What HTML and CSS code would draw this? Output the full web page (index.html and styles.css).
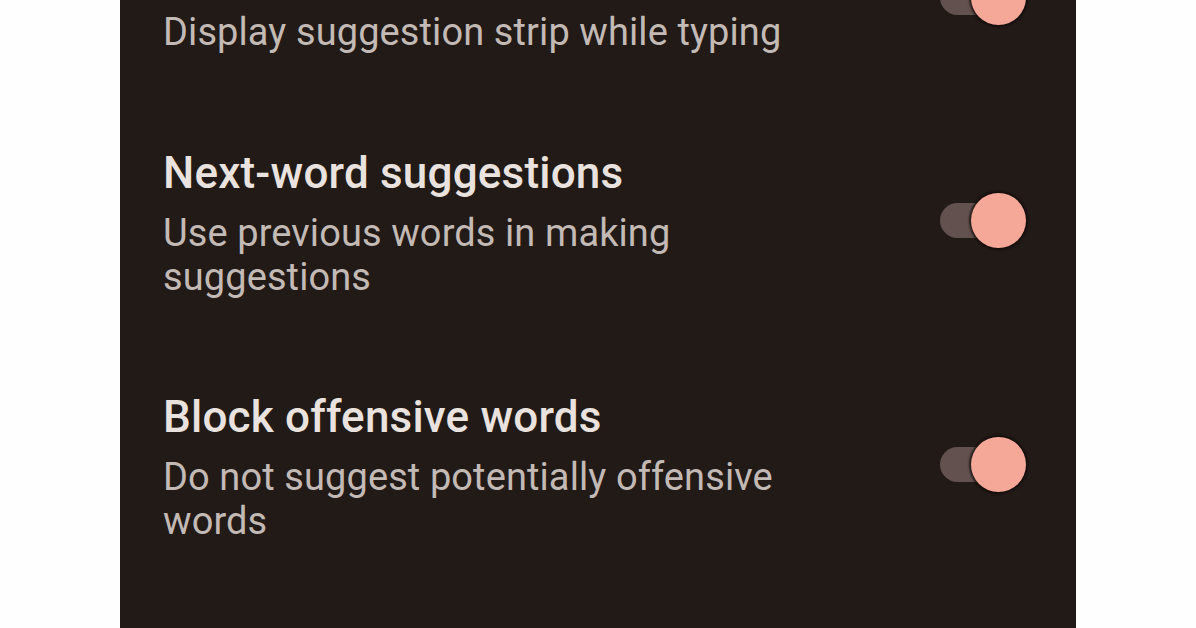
FILE: index.html
```html
<!DOCTYPE html>
<html lang="en">
<head>
    <meta charset="UTF-8">
    <meta name="viewport" content="width=device-width, initial-scale=1.0">
    <title>Text correction</title>
    <link rel="stylesheet" href="styles.css">
</head>
<body>
    <div class="screen">
        <div class="settings">
            <div class="setting-row">
                <div class="setting-text">
                    <div class="setting-title">Show suggestion strip</div>
                    <div class="setting-summary">Display suggestion strip while typing</div>
                </div>
                <div class="switch on"></div>
            </div>
            <div class="setting-row">
                <div class="setting-text">
                    <div class="setting-title">Next-word suggestions</div>
                    <div class="setting-summary">Use previous words in making suggestions</div>
                </div>
                <div class="switch on"></div>
            </div>
            <div class="setting-row">
                <div class="setting-text">
                    <div class="setting-title">Block offensive words</div>
                    <div class="setting-summary">Do not suggest potentially offensive words</div>
                </div>
                <div class="switch on"></div>
            </div>
        </div>
    </div>
</body>
</html>
```

FILE: styles.css
```css
body {
    font-family: Roboto, "Liberation Sans", sans-serif;
    background-color: #fefefe;
    margin: 0;
    padding: 0;
    height: 628px;
    overflow: hidden;
}
.screen {
    margin-left: 120px;
    width: 956px;
    height: 628px;
    background-color: #211a17;
    overflow: hidden;
}
.settings {
    margin-top: -53px;
    display: flex;
    flex-direction: column;
    gap: 93.5px;
}
.setting-row {
    display: flex;
    align-items: center;
    justify-content: space-between;
    padding: 0 50px 0 43px;
}
.setting-text {
    max-width: 660px;
}
.setting-title {
    font-size: 44px;
    font-weight: 500;
    letter-spacing: 0.2px;
    line-height: 50px;
    color: #e9e2de;
}
.setting-summary {
    margin-top: 13px;
    font-size: 38px;
    letter-spacing: 0.1px;
    line-height: 44px;
    color: #c3b9b5;
}

/* switch: track on the left, thumb on the right when on */
.switch {
    position: relative;
    width: 86px;
    height: 55px;
    margin-bottom: 6px;
    flex-shrink: 0;
}
.switch::before {
    content: "";
    position: absolute;
    left: 0;
    top: 10px;
    width: 72px;
    height: 35px;
    border-radius: 18px;
    background-color: #62514e;
}
.switch::after {
    content: "";
    position: absolute;
    right: 0;
    top: 0;
    width: 55px;
    height: 55px;
    border-radius: 50%;
    background-color: #f6a898;
    box-shadow: 0 0 2px 2px rgba(18, 11, 9, 0.75);
}
```
